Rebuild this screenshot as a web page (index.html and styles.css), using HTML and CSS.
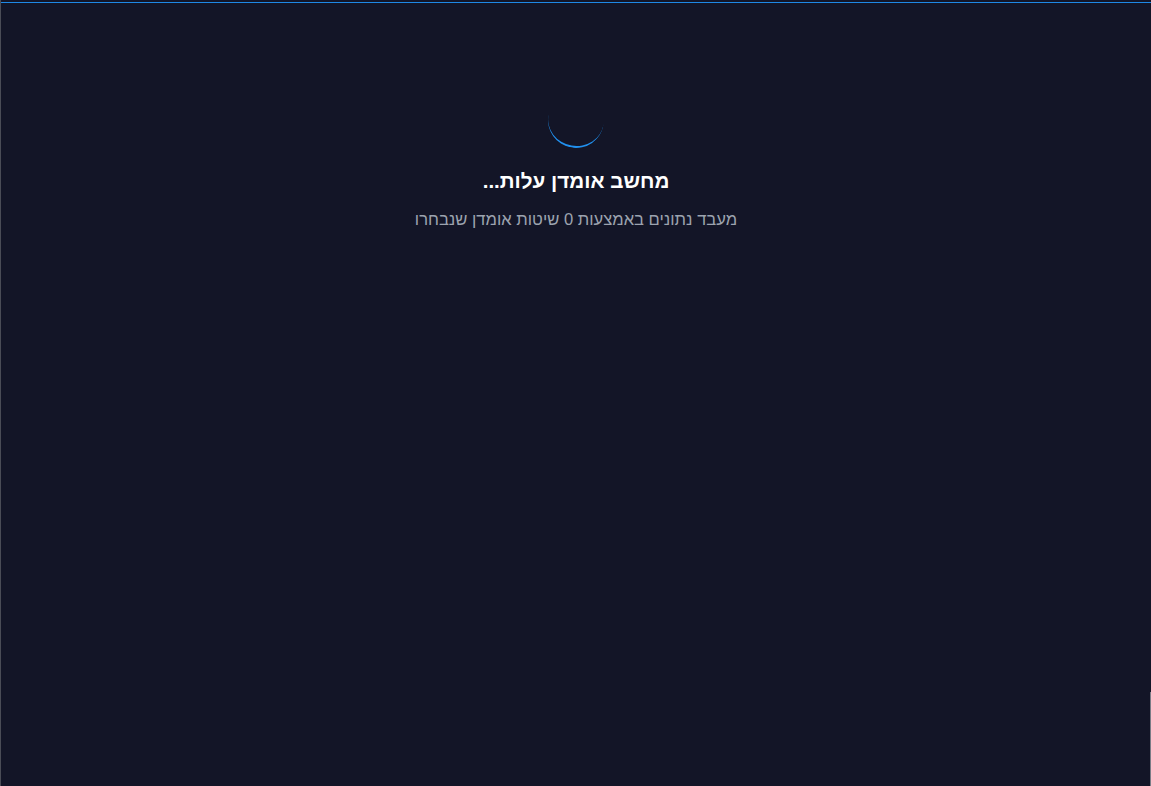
FILE: index.html
```html
<!DOCTYPE html>
<html lang="he" dir="rtl">
<head>
<meta charset="utf-8">
<title>מחשב אומדן עלות</title>
<link rel="stylesheet" href="styles.css">
</head>
<body>
<div class="frame">
  <div class="topline"></div>
  <main class="loading">
    <div class="spinner"></div>
    <h2 class="title">מחשב אומדן עלות...</h2>
    <p class="subtitle">מעבד נתונים באמצעות 0 שיטות אומדן שנבחרו</p>
  </main>
  <div class="edge-right"></div>
</div>
</body>
</html>
```
FILE: styles.css
```css
html, body {
  margin: 0;
  padding: 0;
  height: 100%;
  background: #131527;
}
body {
  font-family: "Liberation Sans", Arial, sans-serif;
  overflow: hidden;
}
.frame {
  position: relative;
  height: 786px;
  box-sizing: border-box;
  border-left: 1px solid #4a4c56;
  padding-top: 2px;
}
.topline {
  height: 1px;
  background: #1e88e5;
}
.loading {
  display: flex;
  flex-direction: column;
  align-items: center;
  padding-top: 89px;
}
.spinner {
  width: 56px;
  height: 56px;
  box-sizing: border-box;
  border-radius: 50%;
  border-bottom: 2px solid #2190ee;
  transform: rotate(10deg);
}
.title {
  margin: 19px 0 0;
  font-size: 20.6px;
  line-height: 28px;
  font-weight: 700;
  color: #ffffff;
}
.subtitle {
  margin: 13px 0 0;
  font-size: 16.6px;
  line-height: 24px;
  color: #9ca3af;
}
.edge-right {
  position: absolute;
  right: 0;
  top: 692px;
  bottom: 0;
  width: 1px;
  background: #7a7c86;
}
```
